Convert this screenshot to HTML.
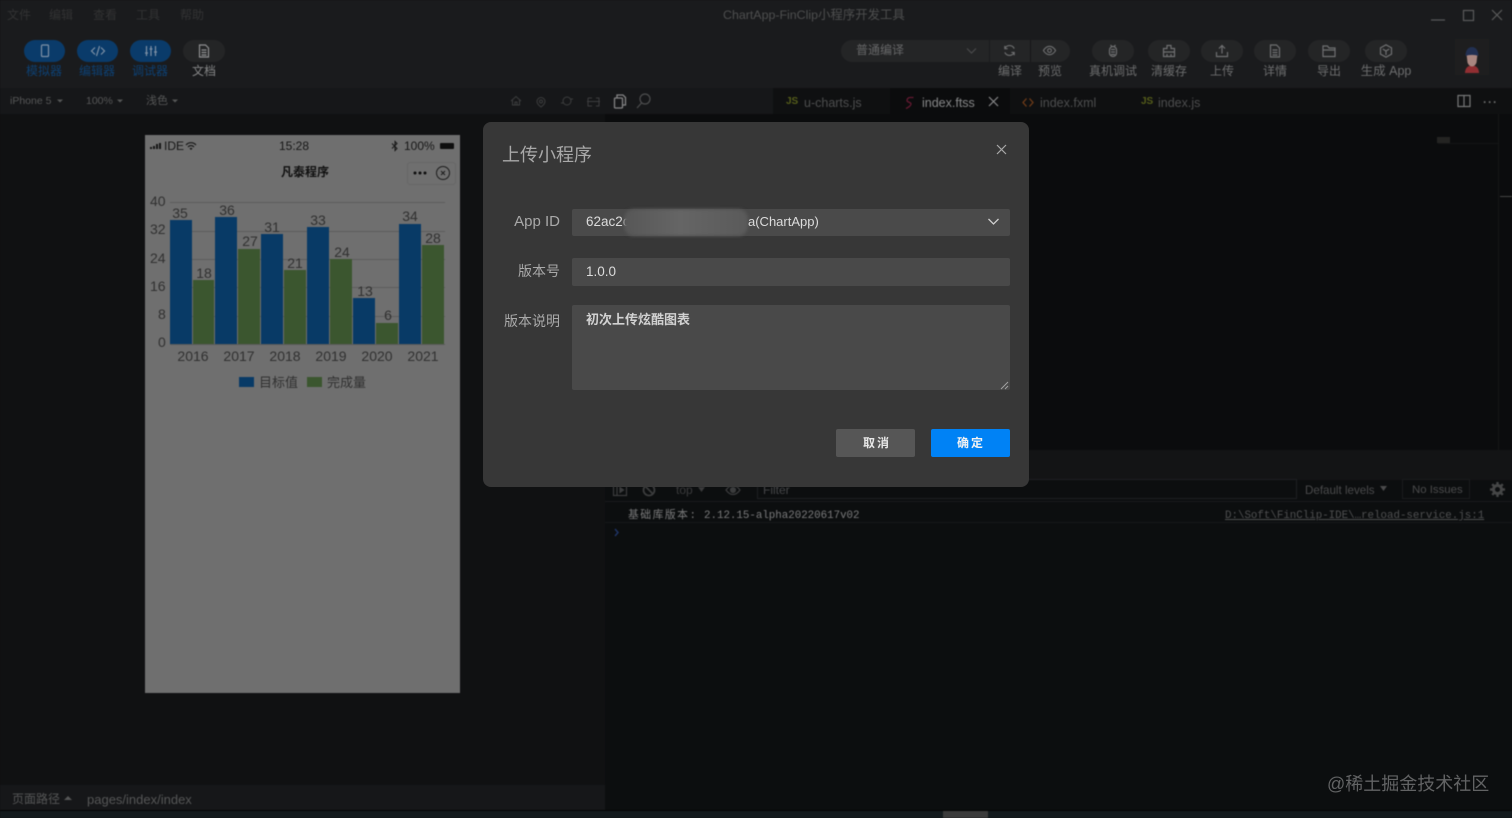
<!DOCTYPE html>
<html lang="zh"><head><meta charset="utf-8"><title>ChartApp-FinClip小程序开发工具</title>
<style>
html,body{margin:0;padding:0;width:1512px;height:818px;overflow:hidden;background:#0f1011}
body{position:relative;font-family:"Liberation Sans","Noto Sans CJK SC",sans-serif;color:#777}
#base{position:absolute;left:0;top:0;width:1512px;height:818px;overflow:hidden;filter:brightness(.8) blur(.4px)}
#modal{position:absolute;left:0;top:0;width:1512px;height:818px;filter:blur(.25px)}
.a{position:absolute}
.t{position:absolute;white-space:nowrap;line-height:1}
.pill{position:absolute;top:40px;width:42px;height:22px;border-radius:11px;background:#2d2e30}
.pill.b{background:#0d4a85;width:41px}
.lbl{position:absolute;top:65px;font-size:12px;line-height:13px;white-space:nowrap;color:#868788;transform:translateX(-50%)}
.pill svg{position:absolute;left:13px;top:3px;width:16px;height:16px;fill:none;stroke:#8b8c8d;stroke-width:1.2}
.ct{position:absolute;font-size:14px;line-height:14px;color:#3c3c3c;white-space:nowrap;transform:translateX(-50%)}
.yl{position:absolute;font-size:14px;line-height:14px;color:#3c3c3c;white-space:nowrap}
.bar{position:absolute}
.blue{background:#0a4880}.green{background:#4a6c3b}
.grid{position:absolute;left:170px;width:275px;height:1px;background:#747474}
.inp{position:absolute;left:572px;width:438px;background:#494949;border-radius:2px}
.flab{position:absolute;right:952px;font-size:14px;line-height:16px;color:#a9a9a9;white-space:nowrap}
.tab{position:absolute;top:96px;font-size:12.5px;line-height:14px;white-space:nowrap;color:#5f6061}
.mono{font-family:"Liberation Mono","Noto Sans CJK SC",monospace;font-size:10.8px}
</style></head><body>
<div id="base">

<!-- base regions -->
<div class="a" style="left:0;top:0;width:1512px;height:88px;background:#212224"></div>
<div class="a" style="left:0;top:88px;width:773px;height:26px;background:#1c1d1f"></div>
<div class="a" style="left:773px;top:88px;width:739px;height:26px;background:#131415"></div>
<div class="a" style="left:0;top:114px;width:605px;height:671px;background:#141516"></div>
<div class="a" style="left:605px;top:114px;width:907px;height:336px;background:#0e0f10"></div>
<div class="a" style="left:605px;top:450px;width:907px;height:30px;background:#18191a"></div>
<div class="a" style="left:605px;top:480px;width:907px;height:330px;background:#0f1113"></div>
<div class="a" style="left:0;top:785px;width:605px;height:25px;background:#1c1d1f"></div>
<div class="a" style="left:0;top:810px;width:1512px;height:1px;background:#050505"></div>
<div class="a" style="left:0;top:811px;width:1512px;height:7px;background:#182024"></div>
<div class="a" style="left:943px;top:811px;width:45px;height:7px;background:#4a4a4a"></div>

<!-- menu -->
<div class="t" style="left:7px;top:9px;font-size:12px;color:#3e3f40">文件</div>
<div class="t" style="left:49px;top:9px;font-size:12px;color:#3e3f40">编辑</div>
<div class="t" style="left:93px;top:9px;font-size:12px;color:#3e3f40">查看</div>
<div class="t" style="left:136px;top:9px;font-size:12px;color:#3e3f40">工具</div>
<div class="t" style="left:180px;top:9px;font-size:12px;color:#3e3f40">帮助</div>
<div class="t" style="left:723px;top:9px;font-size:12.4px;color:#606162">ChartApp-FinClip小程序开发工具</div>

<!-- window controls -->
<svg class="a" style="left:1425px;top:5px" width="85" height="22" fill="none" stroke="#707172" stroke-width="1.2"><path d="M6 15h14"/><rect x="38.500" y="5.500" width="10" height="10"/><path d="M67 5l10 10M77 5L67 15"/></svg>

<!-- left toolbar -->
<div class="pill b" style="left:24px"><svg viewBox="0 0 16 16" style="stroke:#9db5cf"><rect x="4.500" y="2" width="7" height="11.500" rx="1"/></svg></div>
<div class="pill b" style="left:77px"><svg viewBox="0 0 16 16" style="stroke:#9db5cf"><path d="M5 4.500L1.500 8 5 11.500M11 4.500L14.500 8 11 11.500M9.500 3L6.500 13"/></svg></div>
<div class="pill b" style="left:130px"><svg viewBox="0 0 16 16" style="stroke:#9db5cf" stroke-width="1.500"><path d="M3.500 3v10M8 3v10M12.500 3v10M2 10h3M6.500 6h3M11 9h3"/></svg></div>
<div class="pill" style="left:183px"><svg viewBox="0 0 16 16" style="stroke:#b3b4b5"><path d="M3.500 2h6l3 3v9h-9zM5.500 7h5M5.500 9.500h5M5.500 12h5"/></svg></div>
<div class="lbl" style="left:44px;color:#10508f">模拟器</div>
<div class="lbl" style="left:97px;color:#10508f">编辑器</div>
<div class="lbl" style="left:150px;color:#10508f">调试器</div>
<div class="lbl" style="left:204px;color:#a5a6a7">文档</div>

<!-- compile selector -->
<div class="a" style="left:841px;top:40px;width:148px;height:22px;border-radius:11px 0 0 11px;background:#2d2e30"></div>
<div class="t" style="left:856px;top:44px;font-size:12px;color:#808182">普通编译</div>
<svg class="a" style="left:965px;top:46px" width="13" height="10" fill="none" stroke="#5c5d5e" stroke-width="1.200"><path d="M2 2.500l4.500 4.500L11 2.500"/></svg>
<div class="a" style="left:990px;top:40px;width:40px;height:22px;background:#2d2e30"></div>
<div class="a" style="left:1030px;top:40px;width:40px;height:22px;border-left:1px solid #1c1c1e;box-sizing:border-box;border-radius:0 11px 11px 0;background:#2d2e30"></div>
<svg class="a" style="left:1002px;top:43px" width="15" height="15" viewBox="0 0 16 16" fill="none" stroke="#8b8c8d" stroke-width="1.200"><path d="M3 6a5.500 5.500 0 0 1 10 0M13 10a5.500 5.500 0 0 1-10 0M3 3v3h3M13 13v-3h-3"/></svg>
<svg class="a" style="left:1042px;top:43px" width="15" height="15" viewBox="0 0 16 16" fill="none" stroke="#8b8c8d" stroke-width="1.200"><path d="M1.500 8c2-3.300 4-4.500 6.500-4.500S12.500 4.700 14.500 8c-2 3.300-4 4.500-6.500 4.500S3.500 11.300 1.500 8z"/><circle cx="8" cy="8" r="2"/></svg>
<div class="lbl" style="left:1010px">编译</div>
<div class="lbl" style="left:1050px">预览</div>

<!-- right toolbar -->
<div class="pill" style="left:1092px"><svg viewBox="0 0 16 16"><rect x="4.500" y="3.500" width="7" height="10" rx="3.500"/><path d="M6 6.500h4M6 9h4M6 11.500h4M5.500 2l1.500 1.500M10.500 2L9 3.500"/></svg></div>
<div class="pill" style="left:1148px"><svg viewBox="0 0 16 16"><path d="M6 2.500h4v3h3.500v8h-11v-8H6zM2.500 9h11M6 11v2.500M10 11v2.500"/></svg></div>
<div class="pill" style="left:1201px"><svg viewBox="0 0 16 16"><path d="M8 10.500V3M5 5.500L8 2.500l3 3M2.500 9v4.500h11V9"/></svg></div>
<div class="pill" style="left:1254px"><svg viewBox="0 0 16 16"><path d="M3.500 2h6l3 3v9h-9zM5.500 7h5M5.500 9.500h5M5.500 12h5"/></svg></div>
<div class="pill" style="left:1308px"><svg viewBox="0 0 16 16"><path d="M2 3h4.500l1.500 2h6v8.500H2zM2 7h12"/></svg></div>
<div class="pill" style="left:1365px"><svg viewBox="0 0 16 16"><path d="M8 1.800l5.500 3.100v6.200L8 14.200l-5.500-3.100V4.900zM4.800 6L8 8l3.200-2M8 8v4"/></svg></div>
<div class="lbl" style="left:1113px">真机调试</div>
<div class="lbl" style="left:1169px">清缓存</div>
<div class="lbl" style="left:1222px">上传</div>
<div class="lbl" style="left:1275px">详情</div>
<div class="lbl" style="left:1329px">导出</div>
<div class="lbl" style="left:1386px;font-size:12.5px">生成 App</div>

<!-- avatar -->
<svg class="a" style="left:1455px;top:39px" width="34" height="36" viewBox="0 0 34 36"><rect width="34" height="36" fill="#252627"/><path d="M10 34c0-5 3-7.500 7-7.500s7 2.500 7 7.500z" fill="#b53a3e"/><path d="M11.500 15h11l-1 8.500c-.8 2.500-2.800 4-4.500 4s-3.700-1.500-4.500-4z" fill="#d3a8a0"/><path d="M10.500 17c0-6 3-9 6.500-9s6.500 3 6.500 9c-4-1.500-9-1.500-13 0z" fill="#2a3c66"/></svg>

<!-- sim toolbar -->
<div class="t" style="left:10px;top:96px;font-size:10.5px;color:#6a6b6c">iPhone 5</div>
<div class="t" style="left:86px;top:96px;font-size:10.5px;color:#6a6b6c">100%</div>
<div class="t" style="left:146px;top:96px;font-size:11px;color:#6a6b6c">浅色</div>
<svg class="a" style="left:0;top:96px" width="190" height="12" fill="#6a6b6c"><path d="M57 3.500h6l-3 3zM117 3.500h6l-3 3zM172 3.500h6l-3 3z"/></svg>
<svg class="a" style="left:508px;top:92px" width="145" height="18" fill="none" stroke="#4b4c4d" stroke-width="1"><path d="M3 9l5-4.500L13 9M4.500 8v5h7V8M7 13v-3h2v3"/><path d="M33 5.500a4 4 0 0 1 4 4c0 2.500-4 5.500-4 5.500s-4-3-4-5.500a4 4 0 0 1 4-4z"/><circle cx="33" cy="9.500" r="1.500"/><circle cx="59" cy="9" r="4"/><path d="M53 11h3M62 7h3"/><path d="M80 6h4M88 6h3v8h-3M84 14h-4V6M79 9.500h13"/><g stroke="#a5a5a6" stroke-width="1.300"><rect x="106.500" y="6" width="8" height="10" rx="1"/><path d="M109 6V3h6l2.500 2.500V13h-3"/></g><g stroke="#5f6061" stroke-width="1.200"><circle cx="137" cy="7" r="5"/><path d="M133.500 11L129 16"/></g></svg>

<!-- editor tabs -->
<div class="a" style="left:890px;top:88px;width:120px;height:26px;background:#0e0f10"></div>
<div class="t" style="left:786px;top:97px;font-size:10px;font-weight:bold;color:#6a7420">JS</div>
<div class="tab" style="left:804px">u-charts.js</div>
<svg class="a" style="left:904px;top:95px" width="12" height="15" fill="none" stroke="#7d1f3d" stroke-width="1.300"><path d="M9.500 2.500H6a3 3 0 0 0-3 3c0 2 4 1.500 4 3.500 0 1.500-3 3.500-5 4.500"/></svg>
<div class="tab" style="left:922px;color:#a8a9aa">index.ftss</div>
<svg class="a" style="left:988px;top:96px" width="11" height="11" stroke="#a9aaab" stroke-width="1.200"><path d="M1 1l9 9M10 1l-9 9"/></svg>
<svg class="a" style="left:1022px;top:97px" width="12" height="11" fill="none" stroke="#8a4a1e" stroke-width="1.300"><path d="M4.500 1.500L1 5.500l3.500 4M7.500 1.500l3.500 4-3.500 4"/></svg>
<div class="tab" style="left:1040px">index.fxml</div>
<div class="t" style="left:1141px;top:97px;font-size:10px;font-weight:bold;color:#6a7420">JS</div>
<div class="tab" style="left:1158px">index.js</div>
<svg class="a" style="left:1457px;top:94px" width="14" height="14" fill="none" stroke="#959697" stroke-width="1.200"><rect x="1" y="1.500" width="12" height="11"/><path d="M7 1.500v11"/></svg>
<div class="t" style="left:1483px;top:96px;font-size:12px;font-weight:bold;letter-spacing:1px;color:#838485">···</div>

<!-- editor minimap -->
<div class="a" style="left:1437px;top:137px;width:13px;height:6px;background:#3a3a38;opacity:.7"></div>
<div class="a" style="left:1438px;top:143px;width:60px;height:1px;background:#191a1b"></div>
<div class="a" style="left:1498px;top:114px;width:1px;height:336px;background:#1a1b1c"></div>
<div class="a" style="left:1500px;top:196px;width:12px;height:1px;background:#555"></div>

<!-- phone -->
<div class="a" style="left:145px;top:135px;width:315px;height:558px;background:#8b8b8b"></div>
<div class="t" style="left:164px;top:140px;font-size:12px;color:#1c1c1c">IDE</div>
<svg class="a" style="left:149px;top:141px" width="50" height="10" fill="#1c1c1c"><path d="M1 6h2v2H1zM4 5h2v3H4zM7 3h2v5H7zM10 2h2v6h-2z"/><path d="M37 4a6.500 6.500 0 0 1 10 0M39 6a3.800 3.800 0 0 1 6 0" fill="none" stroke="#1c1c1c" stroke-width="1.100"/><path d="M42 9l-1.500-1.500a2 2 0 0 1 3 0z"/></svg>
<div class="t" style="left:279px;top:140px;font-size:12px;color:#1c1c1c">15:28</div>
<svg class="a" style="left:391px;top:140px" width="8" height="12" fill="none" stroke="#1c1c1c" stroke-width="1"><path d="M1 3.500l5 5L4 10.500v-9l2 2-5 5"/></svg>
<div class="t" style="left:404px;top:140px;font-size:12px;color:#1c1c1c">100%</div>
<div class="a" style="left:440px;top:143px;width:14px;height:6px;background:#111;border-radius:1px"></div>
<div class="t" style="left:281px;top:166px;font-size:12px;font-weight:bold;color:#141414">凡泰程序</div>
<div class="a" style="left:407px;top:162px;width:49px;height:23px;box-sizing:border-box;border:1px solid #808080;border-radius:3px"></div>
<svg class="a" style="left:410px;top:164px" width="44" height="18"><g fill="#111"><circle cx="5" cy="9" r="1.500"/><circle cx="10" cy="9" r="1.500"/><circle cx="15" cy="9" r="1.500"/></g><circle cx="33" cy="9" r="6.500" fill="none" stroke="#222" stroke-width="1"/><path d="M31 7l4 4M35 7l-4 4" stroke="#222" stroke-width="1"/></svg>

<!-- chart -->
<div class="grid" style="top:202px"></div>
<div class="grid" style="top:231px"></div>
<div class="grid" style="top:259px"></div>
<div class="grid" style="top:287px"></div>
<div class="grid" style="top:316px"></div>
<div class="grid" style="top:344px;background:#707070"></div>
<div class="yl" style="left:150px;top:194px">40</div>
<div class="yl" style="left:150px;top:222px">32</div>
<div class="yl" style="left:150px;top:251px">24</div>
<div class="yl" style="left:150px;top:279px">16</div>
<div class="yl" style="left:158px;top:307px">8</div>
<div class="yl" style="left:158px;top:335px">0</div>

<div class="bar blue" style="left:170px;top:220px;width:22px;height:124px"></div>
<div class="bar green" style="left:193px;top:280px;width:21px;height:64px"></div>
<div class="bar blue" style="left:215px;top:217px;width:22px;height:127px"></div>
<div class="bar green" style="left:238px;top:249px;width:22px;height:95px"></div>
<div class="bar blue" style="left:261px;top:234px;width:22px;height:110px"></div>
<div class="bar green" style="left:284px;top:270px;width:22px;height:74px"></div>
<div class="bar blue" style="left:307px;top:227px;width:22px;height:117px"></div>
<div class="bar green" style="left:330px;top:259px;width:22px;height:85px"></div>
<div class="bar blue" style="left:353px;top:298px;width:22px;height:46px"></div>
<div class="bar green" style="left:376px;top:323px;width:22px;height:21px"></div>
<div class="bar blue" style="left:399px;top:224px;width:22px;height:120px"></div>
<div class="bar green" style="left:422px;top:245px;width:22px;height:99px"></div>

<div class="ct" style="left:180px;top:206px">35</div>
<div class="ct" style="left:204px;top:266px">18</div>
<div class="ct" style="left:227px;top:203px">36</div>
<div class="ct" style="left:250px;top:234px">27</div>
<div class="ct" style="left:272px;top:220px">31</div>
<div class="ct" style="left:295px;top:256px">21</div>
<div class="ct" style="left:318px;top:213px">33</div>
<div class="ct" style="left:342px;top:245px">24</div>
<div class="ct" style="left:365px;top:284px">13</div>
<div class="ct" style="left:388px;top:308px">6</div>
<div class="ct" style="left:410px;top:209px">34</div>
<div class="ct" style="left:433px;top:231px">28</div>

<div class="ct" style="left:193px;top:349px">2016</div>
<div class="ct" style="left:239px;top:349px">2017</div>
<div class="ct" style="left:285px;top:349px">2018</div>
<div class="ct" style="left:331px;top:349px">2019</div>
<div class="ct" style="left:377px;top:349px">2020</div>
<div class="ct" style="left:423px;top:349px">2021</div>

<div class="bar blue" style="left:239px;top:377px;width:15px;height:10px"></div>
<div class="t" style="left:259px;top:376px;font-size:13px;color:#3c3c3c">目标值</div>
<div class="bar green" style="left:307px;top:377px;width:15px;height:10px"></div>
<div class="t" style="left:327px;top:376px;font-size:13px;color:#3c3c3c">完成量</div>

<!-- path bar -->
<div class="t" style="left:12px;top:793px;font-size:12px;color:#6a6b6c">页面路径</div>
<svg class="a" style="left:64px;top:795px" width="8" height="6" fill="#6a6b6c"><path d="M0 5h8L4 1z"/></svg>
<div class="t" style="left:87px;top:793px;font-size:13px;color:#6a6b6c">pages/index/index</div>

<!-- console -->
<svg class="a" style="left:612px;top:482px" width="130" height="16" fill="none" stroke="#4a4b4c" stroke-width="1.200"><rect x="1.500" y="2.500" width="13" height="11"/><path d="M5 2.500v11M8 5.500l3.500 2.500L8 10.500z" fill="#4a4b4c"/><circle cx="37" cy="8" r="5.500" stroke-width="1.800"/><path d="M33 4l8 8" stroke-width="1.800"/><path d="M114 8c2.500-3.500 5-4.500 7-4.500s4.500 1 7 4.500c-2.500 3.500-5 4.500-7 4.500s-4.500-1-7-4.500z"/><circle cx="121" cy="8" r="2.500" fill="#4a4b4c"/></svg>
<div class="t" style="left:676px;top:484px;font-size:12px;color:#48494a">top</div>
<svg class="a" style="left:698px;top:486px" width="8" height="6" fill="#48494a"><path d="M0 1h7L3.500 6z"/></svg>
<div class="a" style="left:757px;top:479px;width:540px;height:20px;box-sizing:border-box;border:1px solid #25272a;background:#0f1113"></div>
<div class="t" style="left:763px;top:484px;font-size:12px;color:#56575a">Filter</div>
<div class="t" style="left:1305px;top:485px;font-size:11.6px;color:#5c5d5e">Default levels</div>
<svg class="a" style="left:1380px;top:486px" width="8" height="6" fill="#5c5d5e"><path d="M0 0h7L3.500 5z"/></svg>
<div class="a" style="left:1402px;top:479px;width:68px;height:20px;box-sizing:border-box;border:1px solid #202224"></div>
<div class="t" style="left:1412px;top:485px;font-size:11.4px;color:#5c5d5e">No Issues</div>
<svg class="a" style="left:1490px;top:482px" width="15" height="15" viewBox="0 0 15 15"><circle cx="7.500" cy="7.500" r="4" fill="none" stroke="#565758" stroke-width="3"/><path d="M7.500 0v3M7.500 12v3M0 7.500h3M12 7.500h3M2.200 2.200l2 2M10.800 10.800l2 2M12.800 2.200l-2 2M4.200 10.800l-2 2" stroke="#565758" stroke-width="2.400"/></svg>
<div class="a" style="left:605px;top:501px;width:907px;height:1px;background:#1f2123"></div>
<div class="a" style="left:605px;top:522px;width:907px;height:1px;background:#1c1e20"></div>
<div class="t mono" style="left:628px;top:511px;letter-spacing:1.5px;color:#98999a">基础库版本:</div>
<div class="t mono" style="left:704px;top:511px;color:#98999a">2.12.15-alpha20220617v02</div>
<div class="t mono" style="left:1225px;top:511px;color:#626364;text-decoration:underline">D:\Soft\FinClip-IDE\…reload-service.js:1</div>
<svg class="a" style="left:613px;top:528px" width="8" height="9" fill="none" stroke="#26407d" stroke-width="1.500"><path d="M2 1l3 3.500L2 8"/></svg>

<!-- tiny code fragment behind the dialog -->
<div class="t" style="left:825px;top:118px;font-size:9px;letter-spacing:5px;color:#4a4a4a">.........</div>
</div>

<div id="modal">
<!-- watermark -->
<div class="t" style="left:1327px;top:775px;font-size:18px;color:#626364">@稀土掘金技术社区</div>

<!-- dialog -->
<div class="a" style="left:483px;top:122px;width:546px;height:365px;border-radius:8px;background:#373737"></div>
<div class="t" style="left:502px;top:146px;font-size:18px;color:#a9a9a9">上传小程序</div>
<svg class="a" style="left:996px;top:144px" width="11" height="11" stroke="#a9a9a9" stroke-width="1.200"><path d="M1 1l9 9M10 1l-9 9"/></svg>

<div class="flab" style="top:214px;font-size:15px">App ID</div>
<div class="inp" style="top:209px;height:27px;background:#4a4a4a"></div>
<div class="t" style="left:586px;top:215px;font-size:13.5px;color:#dcdcdc">62ac2c</div>
<div class="a" style="left:624px;top:209px;width:124px;height:27px;border-radius:10px;background:linear-gradient(90deg,#575757,#656565 45%,#606060 70%,#5a5a5a);filter:blur(1.5px)"></div>
<div class="t" style="left:748px;top:215px;font-size:13px;color:#dcdcdc">a(ChartApp)</div>
<svg class="a" style="left:987px;top:217px" width="13" height="10" fill="none" stroke="#cfcfcf" stroke-width="1.300"><path d="M1.500 2l5 5 5-5"/></svg>

<div class="flab" style="top:263px">版本号</div>
<div class="inp" style="top:258px;height:28px"></div>
<div class="t" style="left:586px;top:265px;font-size:13.5px;color:#dcdcdc">1.0.0</div>

<div class="flab" style="top:313px">版本说明</div>
<div class="inp" style="top:305px;height:85px"></div>
<div class="t" style="left:586px;top:313px;font-size:13px;font-weight:bold;color:#d2d2d2">初次上传炫酷图表</div>
<svg class="a" style="left:1000px;top:381px" width="9" height="9" stroke="#a0a0a0" stroke-width="1"><path d="M1 8l7-7M5 8l3-3"/></svg>

<div class="a" style="left:836px;top:429px;width:79px;height:28px;background:#565656;border-radius:2px"></div>
<div class="t" style="left:863px;top:437px;font-size:12px;font-weight:bold;letter-spacing:2px;color:#e8e8e8">取消</div>
<div class="a" style="left:931px;top:429px;width:79px;height:28px;background:#0082f5;border-radius:2px"></div>
<div class="t" style="left:957px;top:437px;font-size:12px;font-weight:bold;letter-spacing:2px;color:#f2f2f2">确定</div>
</div>

</body></html>
